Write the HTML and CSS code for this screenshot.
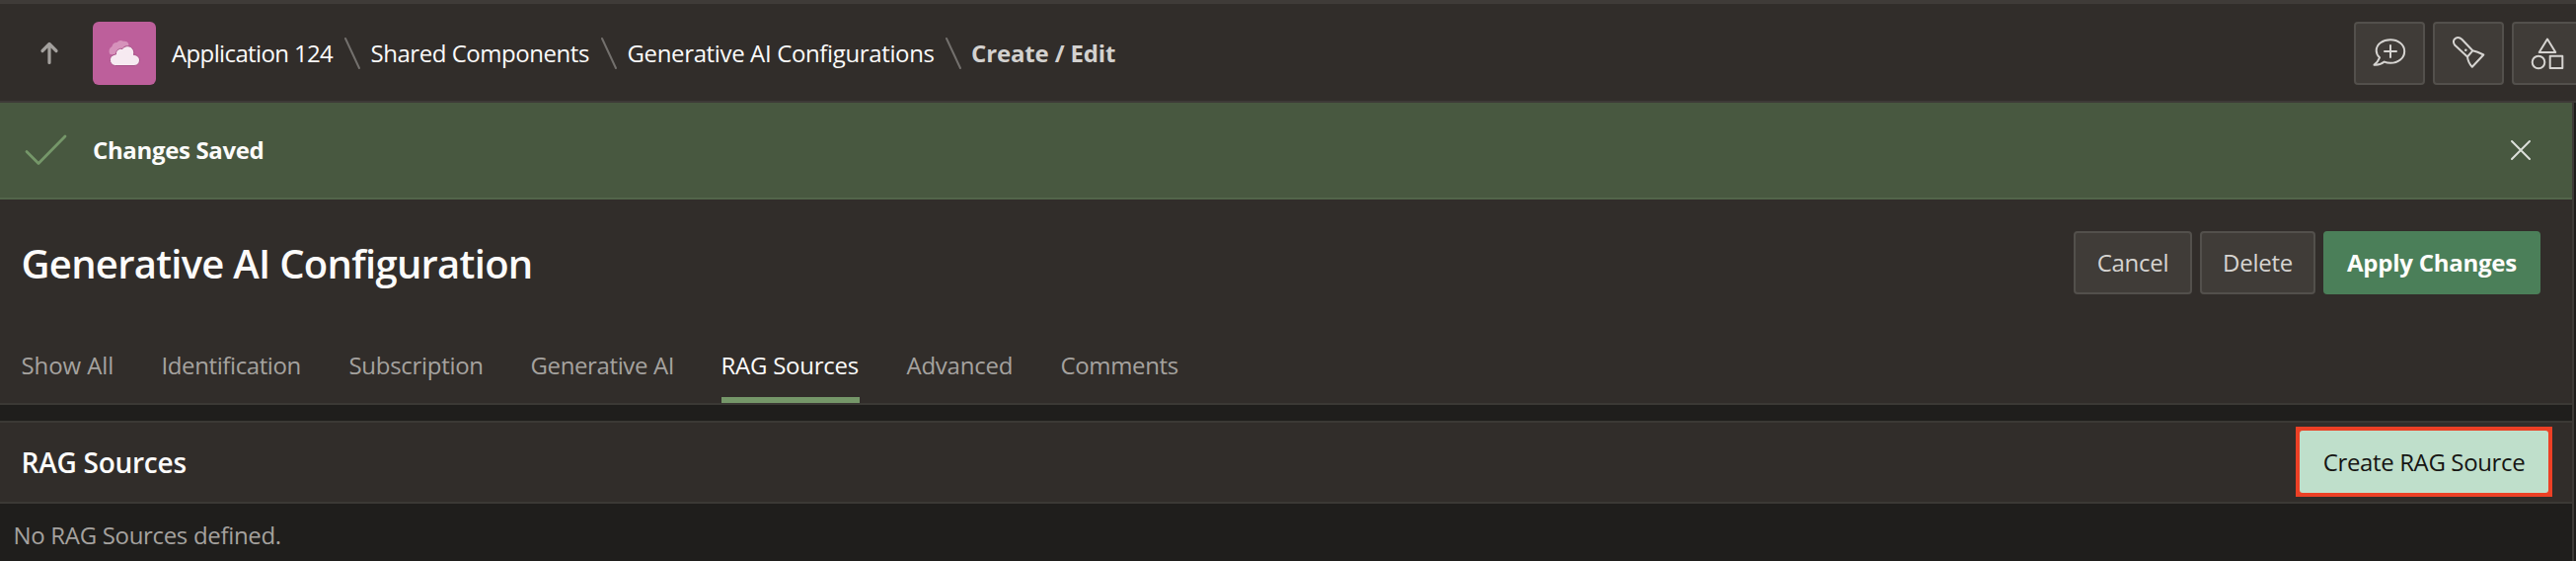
FILE: index.html
```html
<!DOCTYPE html>
<html lang="en">
<head>
<meta charset="utf-8">
<title>Generative AI Configuration</title>
<link rel="stylesheet" href="styles.css">
</head>
<body>
<header class="topbar">
  <a class="up" aria-label="Up">
    <svg width="22" height="24" viewBox="0 0 22 24" fill="none" stroke="#a3a09d" stroke-width="3.2" stroke-linecap="round" stroke-linejoin="round"><path d="M11 21.5V3M4 9.5L11 2.5L18 9.5"/></svg>
  </a>
  <span class="app-icon">
    <svg width="64" height="64" viewBox="0 0 64 64">
      <path fill="#d692bb" d="M17.500 33a5.500 5.500 0 0 1 2-8 5 5 0 0 1 5-4 5 5 0 0 1 6.500-1.200 4.500 4.500 0 0 1 5.500 3.500L31 34Z"/>
      <path fill="#f6eaf1" stroke="#a64f86" stroke-width="1" d="M22.500 44.500a5.500 5.500 0 0 1-5-6c0-3 2.500-5 6-5.500-.5-3.500 3-6.500 6.500-5.500 1.500-3 7-4 9.500-1 2.500 2.200 2.500 5 2 7 3.500 0 6 2.500 6 5.500s-2.200 5.500-5.500 5.500Z"/>
    </svg>
  </span>
  <nav class="crumbs">
    <a class="crumb">Application 124</a>
    <svg class="sep" width="18" height="34" viewBox="0 0 18 34"><path d="M2 2L16 32"/></svg>
    <a class="crumb">Shared Components</a>
    <svg class="sep" width="18" height="34" viewBox="0 0 18 34"><path d="M2 2L16 32"/></svg>
    <a class="crumb">Generative AI Configurations</a>
    <svg class="sep" width="18" height="34" viewBox="0 0 18 34"><path d="M2 2L16 32"/></svg>
    <span class="crumb current">Create / Edit</span>
  </nav>
  <div class="tools">
    <button class="tool" aria-label="Feedback"><svg width="36" height="36" viewBox="0 0 36 36"><path d="M8 22.300C5.500 20 4.700 17.500 4.700 15.200 4.700 8.600 11.300 4.200 19 4.200s14.200 4.700 14.200 11.700S26.800 27.800 19 27.800c-2.300 0-4.300-.4-6.200-1.200C10 29 6.500 30 2.500 29.700 5 28 6.700 25.500 8 22.300ZM19 10v12M13 16h12"/></svg></button>
    <button class="tool" aria-label="Search"><svg width="36" height="36" viewBox="-1.300 0 36 36"><path d="M3 9.800C.8 7 1.500 4 3.500 2.800s4.500-1 6.500 1l11 11.500c3.200.6 6.800 2 11 4.200L20.500 31.800C17.500 28.500 16 25 15.700 21.500Zm12.700 11.700 5.300-6.200"/><circle cx="14" cy="14.800" r="1.300" class="dot"/></svg></button>
    <button class="tool" aria-label="Shared Components"><svg width="36" height="36" viewBox="0 0 36 36"><path d="M18 3.500L26.300 17H9.700Z"/><circle cx="9" cy="27" r="6.300"/><path d="M20.700 20.700h12.600v12.300H20.700Z"/></svg></button>
  </div>
</header>
<main class="page">
  <section class="alert">
    <svg class="check" width="46" height="36" viewBox="0 0 46 36"><path d="M4 19.500L16 31.500L43 4"/></svg>
    <strong class="alert-text">Changes Saved</strong>
    <svg class="close" width="24" height="24" viewBox="0 0 24 24"><path d="M3 3L21 21M21 3L3 21"/></svg>
  </section>
  <section class="page-head">
    <div class="title-row">
      <h1>Generative AI Configuration</h1>
      <div class="buttons">
        <button class="btn cancel">Cancel</button>
        <button class="btn delete">Delete</button>
        <button class="btn apply">Apply Changes</button>
      </div>
    </div>
    <nav class="tabs">
      <a>Show All</a><a>Identification</a><a>Subscription</a><a>Generative AI</a><a class="active">RAG Sources</a><a>Advanced</a><a>Comments</a>
    </nav>
  </section>
  <section class="region">
    <div class="region-head">
      <h2>RAG Sources</h2>
      <div class="highlight"><button class="btn create">Create RAG Source</button></div>
    </div>
    <p class="empty">No RAG Sources defined.</p>
  </section>
</main>
</body>
</html>
```
FILE: styles.css
```css
* { box-sizing: border-box; }
body {
  margin: 0; height: 568px; overflow: hidden; background: #1f1e1c; color: #fcfbfa;
  font: 24px/32px "Open Sans", "Noto Sans", sans-serif;
  display: flex; flex-direction: column;
}
svg { display: block; flex: none; }
button { font: inherit; margin: 0; padding: 0; }
h1, h2, p { margin: 0; }

.topbar {
  flex: none; height: 104px; display: flex; align-items: center; padding-left: 39px; overflow: hidden;
  background: #312d2a; border-top: 4px solid #3f3b38; border-bottom: 2px solid #3d3a37;
}
.up { width: 55px; }
.app-icon { width: 64px; height: 64px; border-radius: 6px; background: #bd5f9b; margin-top: 2px; }
.up svg, .crumbs, .tools { margin-top: 2px; }
.crumbs { display: flex; align-items: center; margin-left: 16px; white-space: nowrap; }
.sep { margin: 0 9.500px 0 10px; fill: none; stroke: #73706d; stroke-width: 2; stroke-linecap: round; }
.crumb { width: 164px; font-weight: 500; letter-spacing: -.63px; }
.crumb:nth-of-type(2) { width: 222.500px; letter-spacing: -.46px; }
.crumb:nth-of-type(3) { width: 311px; letter-spacing: -.36px; }
.crumb.current { width: auto; font-weight: 700; color: #d3d1cf; letter-spacing: -.15px; }
.tools { display: flex; gap: 8px; margin-left: auto; margin-right: -7px; }
.tool {
  width: 72px; height: 64px; display: grid; place-items: center;
  background: #403c38; border: 2px solid #53504c; border-radius: 4px;
}
.tool svg { fill: none; stroke: #d6d4d1; stroke-width: 2; stroke-linejoin: round; stroke-linecap: round; }
.tool .dot { fill: #d6d4d1; stroke: none; }

.page { flex: 1; width: 2608px; border-right: 2px solid #3d3a37; }
.alert {
  height: 98px; display: flex; align-items: center; padding: 0 40px 0 23px;
  background: #485840; border-bottom: 2px solid #52654a;
}
.check { fill: none; stroke: #759769; stroke-width: 2.800; stroke-linecap: round; stroke-linejoin: round; }
.alert-text { margin-left: 25px; letter-spacing: -.35px; }
.close { margin-left: auto; fill: none; stroke: #dce0da; stroke-width: 2; stroke-linecap: round; }

.page-head { height: 208px; background: #312d2a; border-bottom: 2px solid #3b3935; }
.title-row { height: 128px; padding: 0 32px 0 21.500px; display: flex; align-items: center; justify-content: space-between; }
h1 { font-size: 40px; line-height: 52px; font-weight: 600; letter-spacing: -.72px; padding-top: 2px; }
.buttons { display: flex; gap: 8px; }
.btn {
  height: 64px; border: 2px solid #53504c; border-radius: 4px;
  background: #403c38; color: #d6d4d1; letter-spacing: -.25px; white-space: nowrap;
}
.cancel { width: 120px; }
.delete { width: 117px; }
.apply { width: 220px; font-weight: 700; background: #4b7f59; border-color: #4b7f59; color: #fffdfb; }

.tabs { height: 78px; padding-left: 21.500px; display: flex; gap: 48px; white-space: nowrap; }
.tabs a { height: 78px; padding-top: 24px; color: #a5a29f; letter-spacing: -.25px; width: 94px; }
.tabs a:nth-child(1) { letter-spacing: -.1px; }
.tabs a:nth-child(2) { width: 142px; letter-spacing: -.4px; }
.tabs a:nth-child(3) { width: 136px; letter-spacing: -.3px; }
.tabs a:nth-child(4) { width: 145px; letter-spacing: -.38px; }
.tabs a:nth-child(5) { width: 140px; }
.tabs a:nth-child(6) { width: 108px; }
.tabs a:nth-child(7) { letter-spacing: -.35px; }
.tabs .active { color: #fcfbfa; border-bottom: 6px solid #759769; }

.region { margin-top: 16px; }
.region-head {
  height: 84px; padding: 0 20px 0 21.500px; display: flex; align-items: center; justify-content: space-between;
  background: #312d2a; border: solid #3b3935; border-width: 2px 0;
}
h2 { font-size: 28px; line-height: 36px; font-weight: 600; letter-spacing: -.25px; }
.highlight { width: 260px; height: 71px; margin-bottom: 1px; padding: 4px; background: #ec4025; }
.highlight .create {
  display: block; width: 252px; height: 63px; border: 0; border-radius: 3px;
  background: #bfdfcb; color: #161513; letter-spacing: -.37px;
}
.empty { padding: 16px 13.500px; color: #a5a29f; letter-spacing: -.32px; }
```
